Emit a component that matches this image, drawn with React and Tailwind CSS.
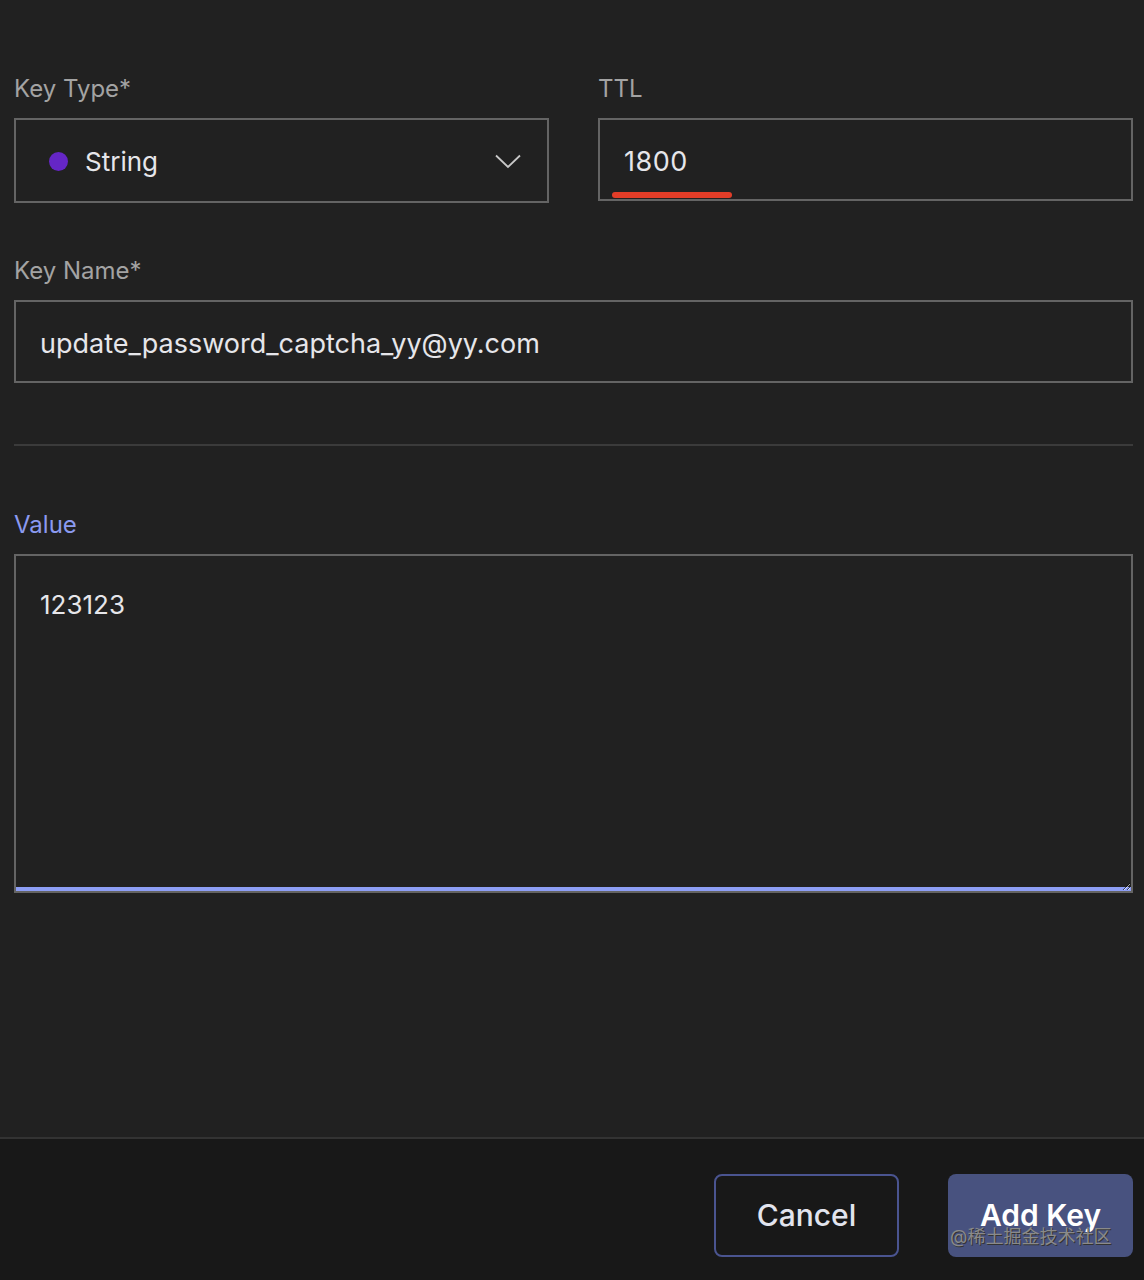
import { useState } from "react";

const font = { fontFamily: "Inter, 'Noto Sans CJK SC', sans-serif" };

function Label({ children, accent }) {
  return (
    <div
      className={`h-[30px] leading-[30px] text-[24px] mb-[14px] ${
        accent ? "text-[#8b9af0]" : "text-[#a3a3a3]"
      }`}
    >
      {children}
    </div>
  );
}

export default function App() {
  const [value, setValue] = useState("123123");

  return (
    <div
      className="w-[1144px] h-[1280px] flex flex-col bg-[#212121] text-[#e6e6ea]"
      style={font}
    >
      <div className="flex-1 pt-[74px] pl-[14px] pr-[11px]">
        {/* type + ttl */}
        <div className="flex gap-[49px]">
          <div className="w-[535px]">
            <Label>Key Type*</Label>
            <div className="h-[85px] border-2 border-[#646464] flex items-center pl-[33px] pr-[26px] pt-[2px]">
              <span className="w-[19px] h-[19px] rounded-full bg-[#6526c6]" />
              <span className="ml-[17px] text-[26px] flex-1">String</span>
              <svg width="26" height="15" viewBox="0 0 26 15" fill="none">
                <polyline
                  points="1,1.5 13,13 25,1.5"
                  stroke="#c8c8c8"
                  strokeWidth="1.8"
                />
              </svg>
            </div>
          </div>
          <div className="w-[535px]">
            <Label>TTL</Label>
            <div className="relative h-[83px] border-2 border-[#646464] flex items-center pl-[24px] pt-[5px]">
              <span className="text-[27px] tracking-[0.02em]">1800</span>
              <span className="absolute left-[12px] top-[72px] w-[120px] h-[6px] rounded-full bg-[#e23d28]" />
            </div>
          </div>
        </div>

        {/* key name */}
        <div className="mt-[53px]">
          <Label>Key Name*</Label>
          <div className="h-[83px] border-2 border-[#646464] flex items-center pl-[24px] pt-[5px]">
            <span className="text-[27px]">update_password_captcha_yy@yy.com</span>
          </div>
        </div>

        <div className="mt-[61px] h-[2px] bg-[#3b3b3b]" />

        {/* value */}
        <div className="mt-[64px]">
          <Label accent>Value</Label>
          <textarea
            value={value}
            onChange={(e) => setValue(e.target.value)}
            className="block w-full h-[339px] bg-transparent border-2 border-[#646464] pt-[33px] px-[24px] text-[26px] leading-[32px] text-[#e6e6ea] outline-none resize-y shadow-[inset_0_-4px_0_#8d9ef5]"
            style={font}
          />
        </div>
      </div>

      {/* footer */}
      <div className="h-[143px] shrink-0 border-t-2 border-[#333333] bg-[#181818] flex items-center justify-end gap-[49px] pr-[11px] pt-[12px]">
        <button className="w-[185px] h-[83px] rounded-[8px] border-2 border-[#4a5490] text-[30px] font-medium text-[#e2e4ee]">
          Cancel
        </button>
        <button className="relative w-[185px] h-[83px] rounded-[8px] bg-[#48527f] text-[30px] font-semibold text-white">
          Add Key
          <span className="absolute left-[2px] top-[49px] text-[18px] font-normal text-[#8a8a8a] whitespace-nowrap [text-shadow:1px_1px_0_#333]">
            @稀土掘金技术社区
          </span>
        </button>
      </div>
    </div>
  );
}
